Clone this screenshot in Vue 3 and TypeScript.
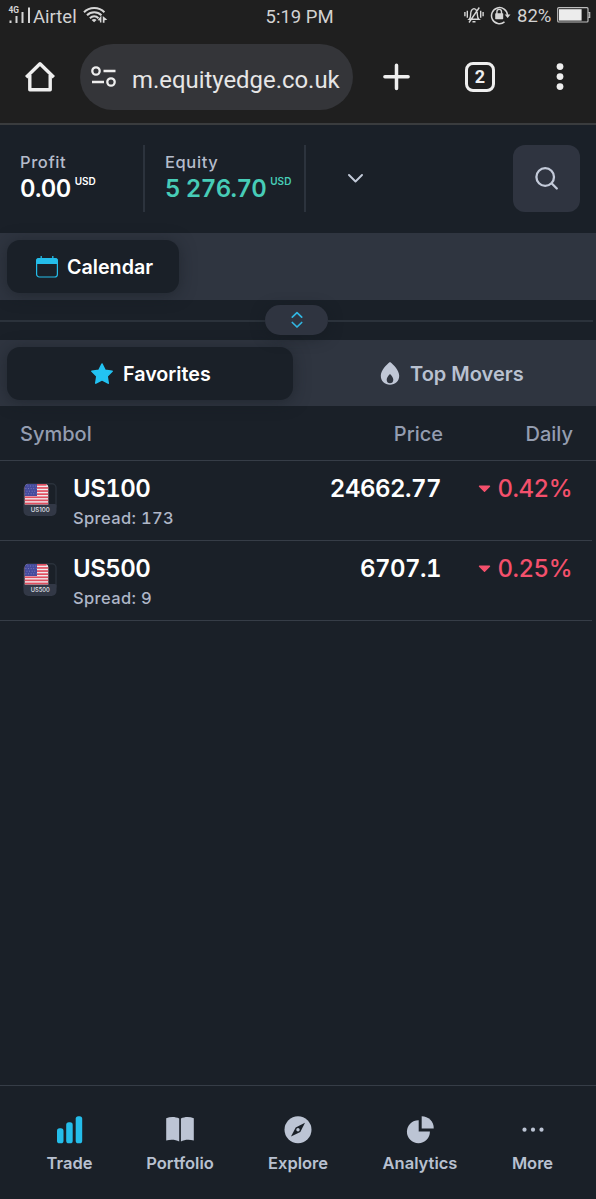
<script setup lang="ts">
interface Instrument {
  symbol: string
  spread: number
  price: string
  daily: string
}

const instruments: Instrument[] = [
  { symbol: 'US100', spread: 173, price: '24662.77', daily: '0.42%' },
  { symbol: 'US500', spread: 9, price: '6707.1', daily: '0.25%' },
]

const stripes: number[] = [0, 1, 2, 3, 4, 5, 6]
</script>

<template>
  <div class="screen">
    <div class="status">
      <div class="status-left">
        <svg class="signal" width="24" height="20" viewBox="0 0 24 20">
          <text x="0.500" y="8.400" class="net" textLength="10.500" lengthAdjust="spacingAndGlyphs">4G</text>
          <g fill="#d6d6d6">
            <rect x="1.500" y="15.500" width="2" height="2.500" />
            <rect x="7.500" y="11" width="2" height="7" />
            <rect x="13.500" y="7" width="2" height="11" />
            <rect x="20" y="2.500" width="2" height="15.500" />
          </g>
        </svg>
        <span class="carrier">Airtel</span>
        <svg class="wifi" width="25" height="18" viewBox="0 0 25 18">
          <g fill="none" stroke="#d6d6d6" stroke-width="2">
            <path d="M1 6.200C6.300.600 16.100.600 21.400 6.200" />
            <path d="M4 9.200c4-4 10.400-4 14.400 0" />
            <path d="M6.900 12.200c2.500-2.500 6.100-2.500 8.600 0" />
          </g>
          <path d="M8.600 14c1.500-1.300 3.700-1.300 5 0l-2.500 2.300z" fill="#d6d6d6" />
          <path d="M18.400 9.500v7h-1.500V14.500l-2.400-.2zM19.800 10l4.500 3.700-2.800.6v2.500h-1.700z" fill="#d6d6d6" />
        </svg>
      </div>
      <span class="clock">5:19 PM</span>
      <div class="status-right">
        <svg width="20" height="18" viewBox="0 0 20 18" fill="none" stroke="#d6d6d6" stroke-width="1.400">
          <path d="M5.200 13.200h9.700c-1.300-1-1.500-2-1.500-4.200 0-3.500-.6-6-3.400-6.400-2.800.4-3.400 2.900-3.400 6.400 0 2.200-.2 3.200-1.400 4.200zM8.500 15.800h3M5 16.500L15.300 1.500M3.300 4.700v7M.9 6v4.300M16.700 4.700v7M19.100 6v4.300" />
        </svg>
        <svg class="lock" width="21" height="20" viewBox="0 0 21 20">
          <path d="M14.500 15.900A8 8 0 1 1 17.500 9" fill="none" stroke="#d6d6d6" stroke-width="1.500" />
          <path d="M14.700 8.600h5.800l-2.900 3.300z" fill="#d6d6d6" />
          <rect x="5.200" y="7.200" width="8" height="6" rx="0.600" fill="#d6d6d6" />
          <path d="M6.900 8V5.700a2.300 2.300 0 0 1 4.600 0V8" fill="none" stroke="#d6d6d6" stroke-width="1.400" />
        </svg>
        <span class="battery-text">82%</span>
        <svg class="battery" width="34" height="16" viewBox="0 0 34 16">
          <rect x="0.700" y="0.700" width="30.300" height="14.300" rx="1" fill="none" stroke="#bdbdbd" stroke-width="1.200" />
          <rect x="2" y="2.200" width="22.600" height="11.400" fill="#ececec" />
          <path d="M31.300 5.500h1.400v4.800h-1.400" fill="none" stroke="#bdbdbd" stroke-width="1.200" />
        </svg>
      </div>
    </div>

    <div class="browser">
      <svg class="home" width="32" height="32" viewBox="0 0 32 32" fill="none" stroke="#eee" stroke-width="3.400" stroke-linejoin="round">
        <path d="M2.200 17.300L16 3.700l13.800 13.600" />
        <path d="M5.800 15v14.700h20.400V15" />
      </svg>
      <div class="address">
        <svg width="26" height="22" viewBox="0 0 26 22" fill="none" stroke="#eee" stroke-width="2.300">
          <circle cx="5" cy="5" r="3.700" />
          <path d="M12.500 5h12M1 16h12" />
          <circle cx="20" cy="16" r="3.700" />
        </svg>
        <span class="url">m.equityedge.co.uk</span>
      </div>
      <svg class="plus" width="28" height="28" viewBox="0 0 28 28" stroke="#eee" stroke-width="3.500" stroke-linecap="round">
        <path d="M13.500 2.200v23.200M1.900 13.800h23.200" />
      </svg>
      <div class="tab-count">2</div>
      <svg class="kebab" width="8" height="28" viewBox="0 0 8 28" fill="#eee">
        <circle cx="4" cy="3.600" r="3.400" />
        <circle cx="4" cy="13.600" r="3.400" />
        <circle cx="4" cy="23.600" r="3.400" />
      </svg>
    </div>

    <header class="account">
      <div class="metric profit">
        <span class="metric-label">Profit</span>
        <span class="metric-value">0.00<sup>USD</sup></span>
      </div>
      <div class="metric equity">
        <span class="metric-label">Equity</span>
        <span class="metric-value">5 276.70<sup>USD</sup></span>
      </div>
      <svg class="expand" width="16" height="10" viewBox="0 0 16 10" fill="none" stroke="#c3cad9" stroke-width="1.900" stroke-linecap="round" stroke-linejoin="round">
        <path d="M2 2L8.500 8.500 15 2" />
      </svg>
      <button class="search">
        <svg width="24" height="24" viewBox="0 0 24 24" fill="none" stroke="#c3cad9" stroke-width="2.300" stroke-linecap="round">
          <circle cx="10.200" cy="10" r="8.800" />
          <path d="M16.800 16.500l5 5" />
        </svg>
      </button>
    </header>

    <div class="band">
      <div class="pill calendar">
        <svg width="22" height="22" viewBox="0 0 22 22">
          <rect x="0.600" y="2.600" width="20.800" height="18.400" rx="2.800" fill="none" stroke="#24bdea" stroke-width="1.200" />
          <path d="M0 8V5a3 3 0 0 1 3-3h16a3 3 0 0 1 3 3v3z" fill="#24bdea" />
          <path d="M5.200 0v3M16.800 0v3" stroke="#24bdea" stroke-width="1.300" />
        </svg>
        <span>Calendar</span>
      </div>
    </div>

    <div class="splitter">
      <div class="handle">
        <svg width="12" height="18" viewBox="0 0 12 18" fill="none" stroke="#31b6e2" stroke-width="1.700" stroke-linecap="round" stroke-linejoin="round">
          <path d="M1.300 6.200L6 1.700l4.700 4.500M1.300 11.500L6 16l4.700-4.500" />
        </svg>
      </div>
    </div>

    <div class="band tabs">
      <div class="pill favorites">
        <svg width="24" height="22" viewBox="0 0 24 22">
          <path d="M12 1l3.100 6.300 7 1-5 4.900 1.100 6.900-6.200-3.200-6.200 3.200 1.100-6.900-5-4.900 7-1z" fill="#23c3f3" stroke="#23c3f3" stroke-width="1.600" stroke-linejoin="round" />
        </svg>
        <span>Favorites</span>
      </div>
      <div class="movers">
        <svg width="20" height="24" viewBox="0 0 20 24">
          <path fill-rule="evenodd" d="M10 0C13.500 2.500 19.200 8.500 19.200 13.700c0 5.300-4 9-9.200 9s-9.200-3.700-9.200-9C.8 8.500 6.500 2.500 10 0zM10 12c-1.700 1.700-3.300 3.700-3.300 5.700 0 2.300 1.400 3.600 3.300 3.600s3.300-1.300 3.300-3.600c0-2-1.600-4-3.300-5.700z" fill="#c0c7d6" />
        </svg>
        <span>Top Movers</span>
      </div>
    </div>

    <div class="thead">
      <span>Symbol</span>
      <span class="th-price">Price</span>
      <span class="th-daily">Daily</span>
    </div>

    <div v-for="item in instruments" :key="item.symbol" class="row">
      <div class="badge">
        <svg width="34" height="34" viewBox="0 0 34 34">
          <path d="M4 .800h25a4 4 0 0 1 4 4V24H1V4.800" fill="none" stroke="#2a313b" stroke-width="1.400" />
          <path d="M1 21h31a1.500 1.500 0 0 1 1.500 1.500V28a5 5 0 0 1-5 5H5.500A5 5 0 0 1 .5 28V22z" fill="#323846" />
          <svg x="1.500" y="1" width="24" height="21" viewBox="0 0 24 21">
            <path d="M4 0h16a4 4 0 0 1 4 4v16.500H0V4a4 4 0 0 1 4-4z" fill="#efe9ed" />
            <rect v-for="n in stripes" :key="n" :x="n === 0 ? 3 : 0" :y="n * 3.100" :width="n === 0 ? 19 : 24" height="1.700" fill="#e04f60" />
            <path d="M4 0h8.500v12H0V4a4 4 0 0 1 4-4z" fill="#454a9c" />
            <g stroke="#8e90c6" stroke-width="0.800" stroke-dasharray="0.900 1.700">
              <path d="M3 2h9M1 4.600h11M2 7.200h10M1 9.800h11" />
            </g>
          </svg>
          <text x="17.300" y="29" class="badge-text" textLength="19" lengthAdjust="spacingAndGlyphs">{{ item.symbol }}</text>
        </svg>
      </div>
      <div class="name">
        <span class="symbol">{{ item.symbol }}</span>
        <span class="spread">Spread: {{ item.spread }}</span>
      </div>
      <span class="price">{{ item.price }}</span>
      <span class="daily">
        <svg width="13" height="8" viewBox="0 0 13 8"><path d="M1.500 1.300h10L6.500 6.300z" fill="#f4506c" stroke="#f4506c" stroke-width="1.400" stroke-linejoin="round" /></svg>
        <span>{{ item.daily }}</span>
      </span>
    </div>

    <nav class="nav">
      <div class="nav-item trade">
        <svg width="28" height="28" viewBox="0 0 28 28" fill="#24bdea">
          <rect x="1" y="12.300" width="6.500" height="15" rx="2.600" />
          <rect x="10.200" y="6.300" width="6.500" height="21" rx="2.600" />
          <rect x="19.700" y="0.200" width="6.500" height="27.100" rx="2.600" />
        </svg>
        <span>Trade</span>
      </div>
      <div class="nav-item portfolio">
        <svg width="28" height="28" viewBox="0 0 28 28" fill="#bcc4d4">
          <path d="M.2 2.200C4.500.600 9.500.700 13.200 2.600v22.900C9.500 23.500 4.500 23.400.2 24.600zM14.900 2.600C18.500.700 23.500.600 27.800 2.200v22.400c-4.300-1.200-9.300-1.100-12.900.9z" />
        </svg>
        <span>Portfolio</span>
      </div>
      <div class="nav-item explore">
        <svg width="28" height="28" viewBox="0 0 28 28">
          <circle cx="14" cy="13.700" r="13.500" fill="#bcc4d4" />
          <path d="M21 6.800l-4.700 9.300-9.300 4.500 4.700-9.200z" fill="#1a2028" />
          <circle cx="14" cy="13.700" r="1.700" fill="#bcc4d4" />
        </svg>
        <span>Explore</span>
      </div>
      <div class="nav-item analytics">
        <svg width="28" height="28" viewBox="0 0 28 28" fill="#bcc4d4">
          <path d="M12.700 4.200v11.300h11.200A11.500 11.500 0 1 1 12.700 4.200z" />
          <path d="M15.700.2A12 12 0 0 1 27.700 12.600h-12z" />
        </svg>
        <span>Analytics</span>
      </div>
      <div class="nav-item more">
        <svg width="28" height="28" viewBox="0 0 28 28" fill="#bcc4d4">
          <circle cx="5.500" cy="13.700" r="2.100" />
          <circle cx="14" cy="13.700" r="2.100" />
          <circle cx="22.500" cy="13.700" r="2.100" />
        </svg>
        <span>More</span>
      </div>
    </nav>
  </div>
</template>

<style>
body {
  background: #1a2028;
}
</style>

<style scoped>
.screen {
  width: 596px;
  height: 1199px;
  box-sizing: border-box;
  display: flex;
  flex-direction: column;
  overflow: hidden;
  background: #1a2028;
  font-family: Inter, "Liberation Sans", sans-serif;
  font-weight: 500;
  white-space: nowrap;
}
svg {
  display: block;
  flex: none;
}
.status,
.browser {
  background: #1f1f1f;
  font-family: Roboto, "Liberation Sans", sans-serif;
  font-weight: 400;
  color: #d2d2d2;
  flex: none;
}
.status {
  height: 34px;
  display: grid;
  grid-template-columns: 265.500px 1fr auto;
}
.status-left,
.status-right {
  display: flex;
  align-items: flex-start;
}
.signal {
  margin: 5px 0 0 8px;
}
.net {
  font: 700 8.500px Roboto, sans-serif;
  fill: #d6d6d6;
}
.carrier {
  margin: 6px 0 0 1px;
  font-size: 18.500px;
  line-height: 22px;
  width: 43px;
}
.wifi {
  margin: 6px 0 0 7px;
}
.clock {
  font-size: 18.500px;
  line-height: 22px;
  padding-top: 6px;
}
.status-right {
  padding: 6px 5px 0 0;
}
.lock {
  margin: 0 0 0 6px;
}
.battery-text {
  font-size: 18.500px;
  line-height: 21px;
  width: 35px;
  margin-left: 6px;
}
.battery {
  margin: 1px 0 0 5px;
}
.browser {
  height: 91px;
  box-sizing: border-box;
  border-bottom: 2px solid #3a3c3e;
  display: flex;
  align-items: flex-start;
}
.home {
  margin: 26px 0 0 24px;
}
.address {
  width: 273px;
  height: 66px;
  margin: 10px 0 0 24px;
  border-radius: 33px;
  background: #343539;
  display: flex;
  align-items: center;
  box-sizing: border-box;
  padding-left: 11px;
}
.url {
  margin: 6px 0 0 15px;
  font-size: 23.900px;
  color: #e6e6e6;
}
.plus {
  margin: 29px 0 0 30px;
}
.tab-count {
  width: 30px;
  height: 30px;
  box-sizing: border-box;
  margin: 28px 0 0 54px;
  border: 3px solid #eee;
  border-radius: 8px;
  font-size: 18px;
  font-weight: 700;
  line-height: 24px;
  text-align: center;
  color: #eee;
}
.kebab {
  margin: 29px 0 0 61px;
}
.account {
  height: 108px;
  flex: none;
  box-sizing: border-box;
  display: flex;
  align-items: flex-start;
  padding: 20px 16px 0 20px;
}
.metric {
  height: 67px;
  box-sizing: border-box;
  border-right: 2px solid #2c333d;
  display: flex;
  flex-direction: column;
  padding-top: 6px;
}
.profit {
  width: 125px;
}
.equity {
  width: 161px;
  padding-left: 20px;
}
.metric-label {
  font-size: 16.500px;
  line-height: 22px;
  letter-spacing: 0.600px;
  color: #b5bccb;
}
.metric-value {
  margin-top: 1px;
  display: flex;
  align-items: flex-start;
  font-size: 24px;
  line-height: 30px;
  letter-spacing: -0.600px;
  font-weight: 600;
  font-variant-numeric: tabular-nums;
  color: #fff;
}
.equity .metric-value {
  color: #47ccb7;
}
sup {
  margin-left: 4px;
  font-size: 10px;
  line-height: 15px;
  letter-spacing: 0;
}
.expand {
  margin: 28px 0 0 41px;
}
.search {
  width: 67px;
  height: 67px;
  margin-left: auto;
  padding: 0;
  border: 0;
  border-radius: 12px;
  background: #2f3440;
  display: flex;
  align-items: center;
  justify-content: center;
}
.band {
  height: 67px;
  flex: none;
  box-sizing: border-box;
  padding: 7px;
  background: #2f3540;
  display: flex;
}
.tabs {
  height: 66px;
  padding-bottom: 6px;
}
.pill {
  height: 53px;
  box-sizing: border-box;
  border-radius: 13px;
  background: #1a2028;
  box-shadow: 0 2px 16px rgba(20, 25, 32, 0.5);
  color: #fff;
  font-size: 19.700px;
  font-weight: 600;
  display: flex;
  align-items: center;
}
.calendar {
  width: 172px;
  padding-left: 29px;
  gap: 9px;
}
.favorites {
  width: 286px;
  padding-left: 83px;
  gap: 9px;
}
.movers {
  display: flex;
  align-items: center;
  padding-left: 87px;
  gap: 10px;
  color: #b9c1d0;
  font-size: 20px;
  font-weight: 600;
}
.splitter {
  height: 40px;
  flex: none;
  display: flex;
  align-items: center;
  position: relative;
  z-index: 1;
}
.splitter::before,
.splitter::after {
  content: "";
  height: 2px;
  margin-top: 2px;
  background: #2b323b;
}
.splitter::before {
  width: 265px;
}
.splitter::after {
  width: 265px;
}
.handle {
  width: 63px;
  height: 30px;
  border-radius: 15px;
  background: #2f3440;
  box-shadow: 0 3px 14px rgba(20, 25, 32, 0.5);
  display: flex;
  align-items: center;
  justify-content: center;
}
.thead {
  height: 55px;
  flex: none;
  box-sizing: border-box;
  border-bottom: 1px solid #363d47;
  display: grid;
  grid-template-columns: 200px 243px 130px;
  align-items: center;
  font-size: 20px;
  padding-top: 1px;
  color: #949db0;
}
.thead > :first-child {
  padding-left: 20px;
}
.th-price,
.th-daily {
  text-align: right;
}
.row {
  height: 80px;
  width: 592px;
  flex: none;
  box-sizing: border-box;
  border-bottom: 1px solid #363d47;
  display: grid;
  grid-template-columns: 73px 127px 241px 131px;
  align-items: start;
}
.badge {
  padding: 22px 0 0 23px;
}
.badge-text {
  font: 500 6.500px Inter, sans-serif;
  fill: #e4e7ee;
  text-anchor: middle;
}
.name {
  display: flex;
  flex-direction: column;
  padding-top: 13px;
}
.symbol,
.price,
.daily {
  font-size: 24px;
  line-height: 30px;
  letter-spacing: -0.500px;
  font-weight: 600;
  font-variant-numeric: tabular-nums;
  color: #fff;
}
.spread {
  margin-top: 3px;
  font-size: 16.500px;
  line-height: 22px;
  letter-spacing: 0.350px;
  font-weight: 500;
  font-variant-numeric: tabular-nums;
  color: #aeb6c7;
}
.price {
  padding-top: 13px;
  text-align: right;
}
.daily {
  padding-top: 13px;
  display: flex;
  align-items: center;
  justify-content: flex-end;
  gap: 7px;
  font-weight: 500;
  color: #f4506c;
}
.nav {
  margin-top: auto;
  height: 114px;
  flex: none;
  box-sizing: border-box;
  border-top: 1px solid #363d47;
  padding: 30px 0 0 47px;
  display: flex;
  gap: 54px;
}
.nav-item {
  display: flex;
  flex-direction: column;
  align-items: center;
  gap: 8px;
  font-size: 16.500px;
  line-height: 22px;
  font-weight: 600;
  color: #b8c0d0;
}
.trade {
  width: 45px;
}
.portfolio {
  width: 68px;
}
.explore {
  width: 60px;
}
.analytics {
  width: 76px;
}
.more {
  width: 41px;
}
</style>
